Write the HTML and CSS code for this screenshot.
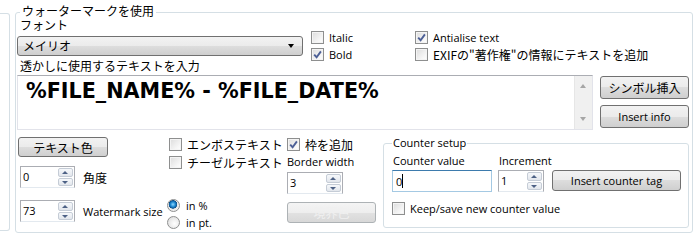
FILE: index.html
```html
<!DOCTYPE html>
<html lang="ja">
<head>
  <meta charset="UTF-8">
  <title>Watermark</title>
  <link rel="stylesheet" href="styles.css">
</head>
<body>

  <div class="window">
    <div class="prev-group"></div>

    <fieldset class="wm-group">
      <legend class="jp tight">ウォーターマークを使用</legend>

      <div class="top-row">
        <div class="font-col">
          <div class="jp tight label first-label">フォント</div>
          <div class="select jp">メイリオ<span class="select-arrow"></span></div>
          <div class="jp label">透かしに使用するテキストを入力</div>
        </div>
        <div class="check-col style-col">
          <div class="check"><span class="box"></span>Italic</div>
          <div class="check"><span class="box checked"><svg width="9" height="9" viewBox="0 0 9 9"><path d="M1.2 4.6 L3.6 7.2 L7.9 1.4" /></svg></span>Bold</div>
        </div>
        <div class="check-col">
          <div class="check"><span class="box checked"><svg width="9" height="9" viewBox="0 0 9 9"><path d="M1.2 4.6 L3.6 7.2 L7.9 1.4" /></svg></span>Antialise text</div>
          <div class="check"><span class="box"></span><span class="jp">EXIFの"著作権"の情報にテキストを追加</span></div>
        </div>
      </div>

      <div class="text-row">
        <div class="textarea">
          <div class="ta-text">%FILE_NAME% - %FILE_DATE%</div>
          <div class="scrollbar">
            <span class="sb-up"></span>
            <span class="sb-down"></span>
          </div>
        </div>
        <div class="side-buttons">
          <div class="btn jp">シンボル挿入</div>
          <div class="btn">Insert info</div>
        </div>
      </div>

      <div class="bottom-row">
        <div class="col-a">
          <div class="btn jp color-btn">テキスト色</div>
          <div class="spin-row angle-row">
            <div class="spin"><span class="spin-val">0</span><span class="spin-btns"><span class="up"></span><span class="down"></span></span></div>
            <span class="jp spin-label">角度</span>
          </div>
          <div class="spin-row size-row">
            <div class="spin"><span class="spin-val">73</span><span class="spin-btns"><span class="up"></span><span class="down"></span></span></div>
            <span class="spin-label">Watermark size</span>
          </div>
        </div>

        <div class="col-b">
          <div class="check"><span class="box"></span><span class="jp">エンボステキスト</span></div>
          <div class="check"><span class="box"></span><span class="jp">チーゼルテキスト</span></div>
          <div class="radios">
            <div class="check"><span class="radio selected"></span>in %</div>
            <div class="check"><span class="radio"></span>in pt.</div>
          </div>
        </div>

        <div class="col-c">
          <div class="check"><span class="box checked"><svg width="9" height="9" viewBox="0 0 9 9"><path d="M1.2 4.6 L3.6 7.2 L7.9 1.4" /></svg></span><span class="jp">枠を追加</span></div>
          <div class="field-label">Border width</div>
          <div class="spin border-spin"><span class="spin-val">3</span><span class="spin-btns"><span class="up"></span><span class="down"></span></span></div>
          <div class="btn disabled jp border-btn">境界色</div>
        </div>

        <fieldset class="counter">
          <legend>Counter setup</legend>
          <div class="counter-row">
            <div class="counter-field value-field">
              <div class="field-label">Counter value</div>
              <div class="input focused"><span>0</span><span class="caret"></span></div>
            </div>
            <div class="counter-field inc-field">
              <div class="field-label">Increment</div>
              <div class="spin"><span class="spin-val">1</span><span class="spin-btns"><span class="up"></span><span class="down"></span></span></div>
            </div>
            <div class="btn counter-btn">Insert counter tag</div>
          </div>
          <div class="check keep-check"><span class="box"></span>Keep/save new counter value</div>
        </fieldset>
      </div>
    </fieldset>
  </div>

</body>
</html>
```

FILE: styles.css
```css
body {
  margin: 0;
  background: #ffffff;
  font-family: "Open Sans", "Noto Sans CJK JP", sans-serif;
  font-size: 11px;
  color: #000000;
}

.jp {
  font-family: "Noto Sans CJK JP", sans-serif;
  font-size: 12px;
}

/* shorter line metrics for the two stacked labels at the top */
.jp.tight {
  font-family: "Liberation Sans", "Noto Sans CJK JP", sans-serif;
}

.window {
  display: flex;
  align-items: flex-start;
  width: 700px;
  height: 240px;
  overflow: hidden;
}

.prev-group {
  flex: none;
  width: 9px;
  height: 216px;
  margin: 13px 5px 0 0;
  border: 1px solid #d5dfe5;
  border-left: none;
  border-radius: 0 3px 3px 0;
}

/* main group box */
.wm-group {
  flex: none;
  box-sizing: border-box;
  width: 678px;
  height: 228px;
  min-width: 0;
  margin: 5px 0 0;
  padding: 0 0 0 1px;
  border: 1px solid #d5dfe5;
  border-radius: 3px;
}

.wm-group > legend {
  margin-left: 3px;
  padding: 0 2px;
  line-height: 14px;
}

.top-row {
  display: flex;
  height: 56px;
}

.font-col {
  width: 286px;
}

.font-col .label {
  height: 19px;
  line-height: 19px;
  padding-left: 3px;
}

.font-col .first-label {
  box-sizing: border-box;
  height: 17px;
  padding-top: 1px;
  line-height: 13px;
}

.select {
  position: relative;
  box-sizing: border-box;
  height: 20px;
  line-height: 17px;
  padding-left: 5px;
  border: 1px solid #707070;
  border-radius: 3px;
  background: linear-gradient(#f2f2f2, #ebebeb 50%, #dddddd 50%, #cfcfcf);
}

.select-arrow {
  position: absolute;
  right: 8px;
  top: 7px;
  border-left: 3.5px solid transparent;
  border-right: 3.5px solid transparent;
  border-top: 4px solid #000000;
}

.check-col {
  width: 96px;
  margin-left: 8px;
  padding-top: 10px;
}

.check {
  display: flex;
  align-items: center;
  height: 17px;
  white-space: nowrap;
}

.box {
  flex: none;
  box-sizing: border-box;
  display: flex;
  align-items: center;
  justify-content: center;
  width: 13px;
  height: 13px;
  margin-right: 5px;
  border: 1px solid #8e8f8f;
  background: linear-gradient(135deg, #dcdcdc, #f6f6f6 70%, #ffffff);
  box-shadow: inset 0 0 0 1px #f4f4f4;
}

.box svg path {
  fill: none;
  stroke: #4c5f96;
  stroke-width: 1.9;
}

.radio {
  flex: none;
  box-sizing: border-box;
  width: 13px;
  height: 13px;
  margin-right: 6px;
  border: 1px solid #8e8f8f;
  border-radius: 50%;
  background: radial-gradient(circle at 60% 60%, #ffffff, #d8d8d8);
}

.radio.selected {
  background: radial-gradient(circle at 45% 40%, #8fd7ff 0, #1b86cf 2.5px, #0d4f8a 4px, #e8e8e8 4.5px, #f8f8f8);
}

/* text box with the watermark text */
.text-row {
  display: flex;
  height: 55px;
}

.textarea {
  display: flex;
  box-sizing: border-box;
  width: 576px;
  height: 55px;
  border: 1px solid #e2e3ea;
  border-top-color: #abadb3;
}

.ta-text {
  flex: 1;
  padding: 3px 0 0 8px;
  font-family: "DejaVu Sans", sans-serif;
  font-weight: bold;
  font-size: 20.7px;
  line-height: 24px;
  white-space: nowrap;
}

.scrollbar {
  position: relative;
  width: 17px;
  background: #f0f0f0;
  border-left: 1px solid #e6e6e6;
}

.sb-up,
.sb-down {
  position: absolute;
  left: 5px;
  border-left: 3.5px solid transparent;
  border-right: 3.5px solid transparent;
}

.sb-up {
  top: 8px;
  border-bottom: 4px solid #a6a6a6;
}

.sb-down {
  bottom: 8px;
  border-top: 4px solid #a6a6a6;
}

.side-buttons {
  margin-left: 7px;
  width: 89px;
}

.btn {
  box-sizing: border-box;
  display: flex;
  align-items: center;
  justify-content: center;
  border: 1px solid #707070;
  border-radius: 3px;
  background: linear-gradient(#f2f2f2, #ebebeb 50%, #dddddd 50%, #cfcfcf);
  white-space: nowrap;
}

.side-buttons .btn {
  height: 23px;
  margin-top: 1px;
}

.side-buttons .btn + .btn {
  margin-top: 6px;
}

.btn.disabled {
  border-color: #adb2b5;
  color: #f0f0f0;
  background: linear-gradient(#f4f4f4, #eeeeee 50%, #e2e2e2 50%, #d8d8d8);
}

/* lower controls */
.bottom-row {
  display: flex;
  align-items: flex-start;
}

.col-a {
  width: 150px;
  padding-top: 7px;
}

.color-btn {
  width: 90px;
  height: 20px;
  margin-left: 1px;
}

.spin-row {
  display: flex;
  align-items: center;
}

.angle-row {
  margin-top: 9px;
}

.size-row {
  margin-top: 12px;
}

.spin-row .spin {
  width: 55px;
  margin-left: 3px;
}

.spin-label {
  margin-left: 8px;
}

.spin {
  box-sizing: border-box;
  display: flex;
  height: 22px;
  border: 1px solid #abadb3;
  border-bottom-color: #e3e9ef;
  background: #ffffff;
}

.spin-val {
  flex: 1;
  padding-left: 2px;
  line-height: 19px;
}

.spin-btns {
  display: flex;
  flex-direction: column;
  gap: 1px;
  width: 15px;
  margin: 1px;
}

.spin-btns span {
  position: relative;
  flex: 1;
  box-sizing: border-box;
  border: 1px solid #c5ccd6;
  border-radius: 2px;
  background: linear-gradient(#f6f8fb, #e2e6ec);
}

.spin-btns span::after {
  content: "";
  position: absolute;
  left: 3px;
  top: 2px;
  border-left: 3.5px solid transparent;
  border-right: 3.5px solid transparent;
}

.spin-btns .up::after {
  border-bottom: 3px solid #4d6185;
}

.spin-btns .down::after {
  border-top: 3px solid #4d6185;
}

.col-b {
  width: 120px;
  padding-top: 5px;
}

.col-b .check,
.col-c .check {
  height: 18px;
  padding-left: 2px;
}

.col-b .radios {
  margin-top: 26px;
}

.col-b .radios .check {
  height: 17px;
  padding-left: 0;
}

.col-c {
  width: 96px;
  padding-top: 5px;
}

.col-c .check {
  padding-left: 0;
}

.field-label {
  height: 18px;
  line-height: 18px;
  white-space: nowrap;
}

.border-spin {
  width: 56px;
  margin-top: 1px;
}

.border-btn {
  width: 89px;
  height: 21px;
  margin-top: 8px;
}

/* counter group */
.counter {
  box-sizing: border-box;
  width: 306px;
  height: 92px;
  min-width: 0;
  margin: 6px 0 0;
  padding: 0 0 0 8px;
  border: 1px solid #d5dfe5;
  border-radius: 3px;
}

.counter > legend {
  padding: 0 1px;
  line-height: 14px;
}

.counter-row {
  display: flex;
  align-items: flex-end;
  margin-top: 2px;
}

.counter-field .field-label {
  padding-left: 1px;
}

.value-field {
  width: 100px;
}

.input {
  box-sizing: border-box;
  display: flex;
  align-items: center;
  height: 22px;
  padding-left: 3px;
  border: 1px solid #a4c9e3;
  border-top-color: #3d7bad;
  background: #ffffff;
}

.caret {
  width: 1px;
  height: 14px;
  background: #000000;
}

.inc-field {
  width: 46px;
  margin-left: 6px;
}

.counter-btn {
  width: 129px;
  height: 21px;
  margin: 0 0 1px 8px;
}

.keep-check {
  margin-top: 8px;
  height: 17px;
}
```
